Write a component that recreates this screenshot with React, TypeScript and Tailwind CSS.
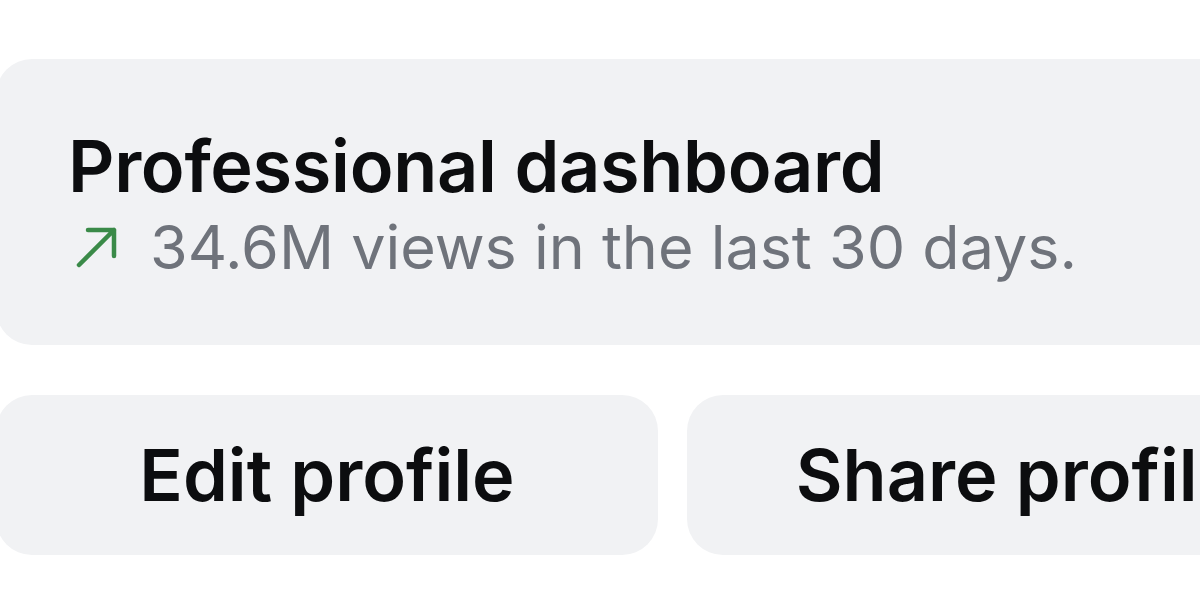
export default function App() {
  return (
    <div className="h-[600px] w-[1200px] overflow-hidden bg-white font-['Inter','Liberation_Sans',sans-serif]">
      <div className="pt-[59px]">
        <div className="-ml-[4px] flex h-[286px] w-[1300px] flex-col rounded-[36px] bg-[#f1f2f4] pl-[72px] pt-[67px]">
          <h2 className="text-[72px] font-semibold leading-[80px] tracking-[-0.3px] text-[#0c0d0f]">
            Professional dashboard
          </h2>
          <div className="mt-[6px] flex items-center">
            <svg width="46" height="46" viewBox="0 0 46 46" className="ml-[6px] mr-[30px]">
              <path
                d="M5 41 L40 6 M14 6 H40 V32"
                fill="none"
                stroke="#3a8a48"
                strokeWidth="4.5"
                strokeLinecap="round"
                strokeLinejoin="round"
              />
            </svg>
            <p className="text-[61px] leading-[70px] text-[#6f737b]">34.6M views in the last 30 days.</p>
          </div>
        </div>
        <div className="-ml-[4px] mt-[50px] flex gap-[29px]">
          <button className="h-[160px] w-[662px] shrink-0 rounded-[36px] bg-[#f1f2f4] text-[72px] font-semibold text-[#0c0d0f]">
            Edit profile
          </button>
          <button className="h-[160px] w-[662px] shrink-0 rounded-[36px] bg-[#f1f2f4] text-[72px] font-semibold text-[#0c0d0f]">
            Share profile
          </button>
        </div>
      </div>
    </div>
  );
}
